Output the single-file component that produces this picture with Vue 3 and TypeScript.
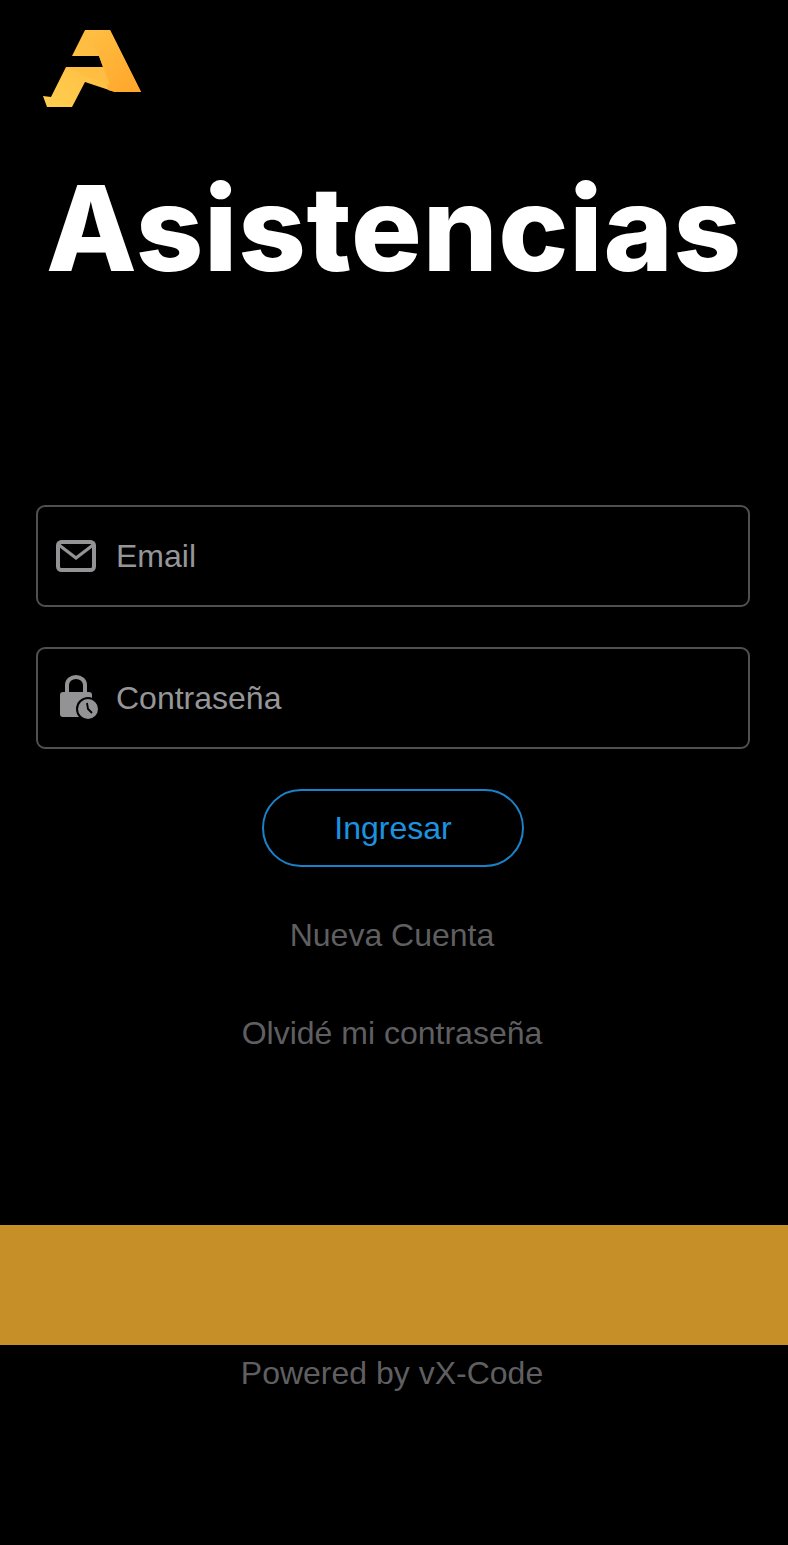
<template>
  <div class="page">
    <header class="brand">
      <svg class="logo" width="100" height="80" viewBox="42 29 100 80" aria-label="Logo">
        <defs>
          <linearGradient id="logoA" x1="0" y1="1" x2="1" y2="0">
            <stop offset="0" stop-color="#ffcf50" />
            <stop offset="1" stop-color="#ffb238" />
          </linearGradient>
          <linearGradient id="logoB" x1="0" y1="0" x2="1" y2="1">
            <stop offset="0" stop-color="#ffc044" />
            <stop offset="1" stop-color="#ffa52a" />
          </linearGradient>
        </defs>
        <polygon points="85,30 110,30 141,92 115,92 85,82 72,107 47,107 43,96 51,97 66,67 103,67 99,56 72,56" fill="url(#logoA)" />
        <polygon points="85,30 110,30 141,92 115,92 108,90 103,67 99,56" fill="url(#logoB)" />
        <polygon points="66,67 103,67 110,85 85,76" fill="#ffbe42" />
      </svg>
      <h1 class="title">Asistencias</h1>
    </header>

    <form class="form" @submit.prevent>
      <label class="field">
        <svg class="icon" width="40" height="32" viewBox="0 0 40 32">
          <rect x="2" y="2" width="36" height="28" rx="3.5" fill="none" stroke="#939396" stroke-width="4" />
          <path d="M3 5 L20 18 L37 5" fill="none" stroke="#939396" stroke-width="3.2" />
        </svg>
        <input v-model="email" type="email" placeholder="Email" />
      </label>

      <label class="field">
        <svg class="icon" width="40" height="46" viewBox="0 0 40 46">
          <path d="M11 18 V10 a9 8 0 0 1 18 0 V18" fill="none" stroke="#939396" stroke-width="4" />
          <rect x="4" y="17" width="32" height="25" rx="3" fill="#939396" />
          <circle cx="32" cy="34" r="12" fill="#000" />
          <circle cx="32" cy="34" r="10" fill="#939396" />
          <path d="M31 28 L32 34 L36 38" fill="none" stroke="#000" stroke-width="1.8" />
        </svg>
        <input v-model="password" type="password" placeholder="Contraseña" />
      </label>

      <button class="submit" type="submit">Ingresar</button>
    </form>

    <nav class="links">
      <a href="#">Nueva Cuenta</a>
      <a href="#">Olvidé mi contraseña</a>
    </nav>

    <div class="band"></div>
    <footer class="powered">Powered by vX-Code</footer>
  </div>
</template>

<script setup lang="ts">
import { ref } from 'vue'

const email = ref('')
const password = ref('')
</script>

<style>
html,
body {
  background: #000;
}
</style>

<style scoped>
.page {
  height: 1545px;
  background: #000;
  font-family: "Liberation Sans", Arial, sans-serif;
  font-size: 32px;
  overflow: hidden;
}

.brand {
  padding-top: 29px;
}

.logo {
  display: block;
  margin-left: 42px;
}

.title {
  margin: 48px 0 0;
  text-align: center;
  font-family: Inter, sans-serif;
  font-size: 118px;
  font-weight: 800;
  line-height: 143px;
  letter-spacing: 0.7px;
  color: #fff;
}

.form {
  margin-top: 205px;
  padding: 0 38px 0 36px;
  display: flex;
  flex-direction: column;
  align-items: center;
}

.field {
  width: 100%;
  height: 102px;
  box-sizing: border-box;
  margin-bottom: 40px;
  padding: 0 0 0 18px;
  display: flex;
  align-items: center;
  border: 2px solid #505052;
  border-radius: 9px;
}

.icon {
  flex: none;
  margin-right: 20px;
  overflow: visible;
}

.field input {
  flex: 1;
  min-width: 0;
  border: 0;
  outline: 0;
  padding: 0;
  background: transparent;
  font: inherit;
  color: #fff;
}

.field input::placeholder {
  color: #969699;
  opacity: 1;
}

.submit {
  width: 262px;
  height: 78px;
  background: transparent;
  border: 2px solid #1a82c8;
  border-radius: 39px;
  font: inherit;
  color: #1b93e0;
}

.links {
  margin-top: 50px;
  padding-right: 4px;
  display: flex;
  flex-direction: column;
  align-items: center;
  gap: 61px;
}

.links a {
  line-height: 37px;
  color: #5f5f61;
  text-decoration: none;
}

.band {
  height: 120px;
  margin-top: 173px;
  background: #c68f27;
}

.powered {
  line-height: 37px;
  margin-top: 10px;
  padding-right: 4px;
  text-align: center;
  color: #5f5f61;
}
</style>
